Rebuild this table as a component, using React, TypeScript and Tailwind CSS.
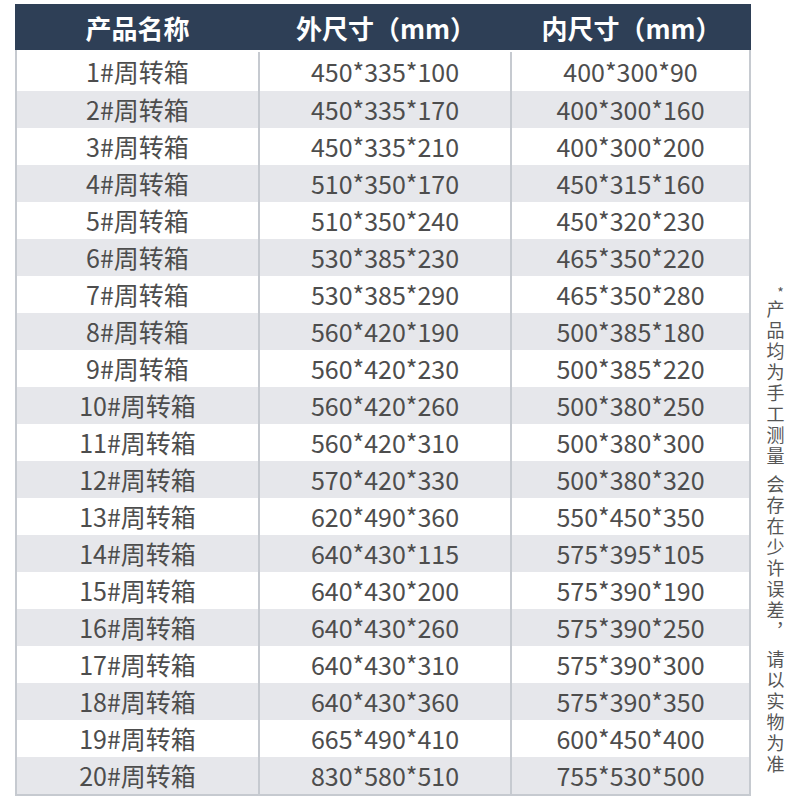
const rows: [string, string, string][] = [
  ['1#周转箱', '450*335*100', '400*300*90'],
  ['2#周转箱', '450*335*170', '400*300*160'],
  ['3#周转箱', '450*335*210', '400*300*200'],
  ['4#周转箱', '510*350*170', '450*315*160'],
  ['5#周转箱', '510*350*240', '450*320*230'],
  ['6#周转箱', '530*385*230', '465*350*220'],
  ['7#周转箱', '530*385*290', '465*350*280'],
  ['8#周转箱', '560*420*190', '500*385*180'],
  ['9#周转箱', '560*420*230', '500*385*220'],
  ['10#周转箱', '560*420*260', '500*380*250'],
  ['11#周转箱', '560*420*310', '500*380*300'],
  ['12#周转箱', '570*420*330', '500*380*320'],
  ['13#周转箱', '620*490*360', '550*450*350'],
  ['14#周转箱', '640*430*115', '575*395*105'],
  ['15#周转箱', '640*430*200', '575*390*190'],
  ['16#周转箱', '640*430*260', '575*390*250'],
  ['17#周转箱', '640*430*310', '575*390*300'],
  ['18#周转箱', '640*430*360', '575*390*350'],
  ['19#周转箱', '665*490*410', '600*450*400'],
  ['20#周转箱', '830*580*510', '755*530*500'],
]

// vertical note on the right, grouped so the gaps match
const noteGroups = ['产品均为手工测量', '会存在少许误差，', '请以实物为准']

export default function App() {
  return (
    <div
      className="w-[800px] h-[800px] bg-white flex text-[#4d4d4d]"
      style={{ fontFamily: '"Noto Sans CJK SC", "Noto Sans", sans-serif' }}
    >
      {/* Table */}
      <div className="ml-[15px] mt-[4px] w-[736px] flex flex-col">
        {/* Header */}
        <div className="h-[46px] bg-[#2e3f56] grid grid-cols-[245px_252px_1fr] text-white text-[26px] font-bold">
          <div className="flex items-center justify-center">产品名称</div>
          <div className="flex items-center justify-center">外尺寸（mm）</div>
          <div className="flex items-center justify-center">内尺寸（mm）</div>
        </div>

        {/* Body */}
        <div className="border-x-2 border-b-2 border-[#c6cad0]">
          {rows.map((r, i) => (
            <div
              key={i}
              className={`grid grid-cols-[243px_252px_1fr] text-[25px] ${
                i === 0 ? 'h-[41px] pt-[2px]' : 'h-[37px]'
              } ${i % 2 === 1 ? 'bg-[#e6e7eb]' : 'bg-white'}`}
            >
              <div className="flex items-center justify-center border-r-2 border-[#c6cad0]">{r[0]}</div>
              <div className="flex items-center justify-center border-r-2 border-[#c6cad0]">{r[1]}</div>
              <div className="flex items-center justify-center">{r[2]}</div>
            </div>
          ))}
        </div>
      </div>

      {/* Side note */}
      <div className="flex-1 flex flex-col items-center pt-[286px] text-[#555]">
        <span className="text-[14px] leading-[12px] ml-[10px]">*</span>
        {noteGroups.map((g, gi) => (
          <div
            key={gi}
            className={`[writing-mode:vertical-rl] text-[18px] leading-[20px] tracking-[3px] ${
              gi > 0 ? 'mt-[7px]' : 'mt-[2px]'
            }`}
          >
            {g}
          </div>
        ))}
      </div>
    </div>
  )
}
